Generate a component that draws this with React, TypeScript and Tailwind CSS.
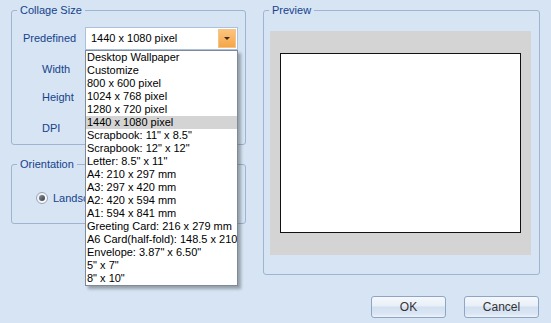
import { useState } from "react";

const sizes = [
  "Desktop Wallpaper",
  "Customize",
  "800 x 600 pixel",
  "1024 x 768 pixel",
  "1280 x 720 pixel",
  "1440 x 1080 pixel",
  'Scrapbook: 11" x 8.5"',
  'Scrapbook: 12" x 12"',
  'Letter: 8.5" x 11"',
  "A4: 210 x 297 mm",
  "A3: 297 x 420 mm",
  "A2: 420 x 594 mm",
  "A1: 594 x 841 mm",
  "Greeting Card: 216 x 279 mm",
  "A6 Card(half-fold): 148.5 x 210 mm",
  'Envelope: 3.87" x 6.50"',
  '5" x 7"',
  '8" x 10"',
];

const GroupBox = ({
  title,
  className,
  children,
}: {
  title: string;
  className?: string;
  children?: React.ReactNode;
}) => (
  <fieldset className={`rounded-[3px] border border-[#9fb4d1] ${className ?? ""}`}>
    <legend className="ml-[5px] px-[3px] text-[11px] leading-[14px] text-[#15428b]">{title}</legend>
    {children}
  </fieldset>
);

export default function App() {
  const [selected] = useState("1440 x 1080 pixel");

  return (
    <div
      className="w-[551px] h-[323px] overflow-hidden bg-[#d6e4f3] text-[11px] text-black"
      style={{ fontFamily: '"Liberation Sans", Arial, sans-serif' }}
    >
      <div className="flex gap-[17px] pl-[11px] pt-[3px]">
        <div className="flex w-[235px] flex-col gap-[12px]">
          <GroupBox title="Collage Size" className="h-[142px]">
            <div className="relative flex items-center pl-[11px] pt-[10px]">
              <span className="w-[62px] text-[#15428b]">Predefined</span>
              <div className="relative">
                <div className="flex h-[23px] w-[153px] items-center border border-[#abc1de] bg-white pl-[5px]">
                  <span className="flex-1">{selected}</span>
                  <span className="mr-[1px] flex h-[19px] w-[18px] items-center justify-center border border-[#f2c48a] bg-gradient-to-b from-[#fcc47c] to-[#f7a544]">
                    <span className="h-0 w-0 border-x-[3px] border-t-[3px] border-x-transparent border-t-[#3b2a17]" />
                  </span>
                </div>
                <div className="absolute left-0 top-[23px] z-10 w-[153px] border border-[#7f8a99] bg-white shadow-[3px_3px_3px_rgba(0,0,0,0.3)]">
                  {sizes.map((s) => (
                    <div
                      key={s}
                      className={`h-[13px] overflow-hidden whitespace-nowrap pl-[1px] leading-[13px] ${
                        s === selected ? "bg-[#d4d4d4]" : ""
                      }`}
                    >
                      {s}
                    </div>
                  ))}
                </div>
              </div>
            </div>
            <div className="flex flex-col pl-[30px] text-[#15428b]">
              <span className="mt-[11px] leading-[16px]">Width</span>
              <span className="mt-[12px] leading-[16px]">Height</span>
              <span className="mt-[15px] leading-[16px]">DPI</span>
            </div>
          </GroupBox>
          <GroupBox title="Orientation" className="h-[67px]">
            <div className="flex items-center pl-[24px] pt-[19px]">
              <span className="flex h-[12px] w-[12px] items-center justify-center rounded-full border border-[#9aa6b5] bg-gradient-to-br from-[#e8edf3] to-white">
                <span className="h-[6px] w-[6px] rounded-full bg-gradient-to-br from-[#8a8f96] to-[#3a3f47]" />
              </span>
              <span className="ml-[5px] text-[#15428b]">Landscape</span>
            </div>
          </GroupBox>
        </div>
        <GroupBox title="Preview" className="h-[272px] w-[277px]">
          <div className="ml-[6px] mr-[8px] mt-[14px] h-[224px] bg-[#d4d4d4] px-[10px] py-[22px]">
            <div className="h-full w-full border border-[#111] bg-white" />
          </div>
        </GroupBox>
      </div>
      <div className="flex justify-end gap-[18px] pr-[12px] pt-[21px]">
        {["OK", "Cancel"].map((b) => (
          <button
            key={b}
            className="h-[22px] w-[75px] rounded-[3px] border border-[#8ea5c5] bg-[linear-gradient(#f5f8fc_0%,#e8eff8_45%,#d2e0f1_50%,#dbe6f4_85%,#eef3fa_100%)] text-[12px] text-[#333]"
          >
            {b}
          </button>
        ))}
      </div>
    </div>
  );
}
